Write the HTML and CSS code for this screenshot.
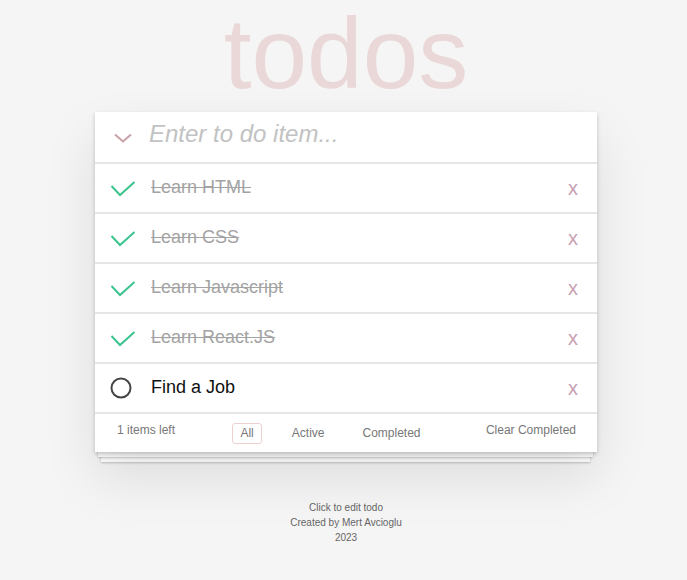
FILE: index.html
```html
<!DOCTYPE html>
<html lang="en">
<head>
<meta charset="utf-8">
<title>todos</title>
<link rel="stylesheet" href="styles.css">
</head>
<body>
<h1 class="title">todos</h1>
<section class="app">
  <div class="sheet sheet-back"></div>
  <div class="sheet sheet-mid"></div>
  <div class="card">
    <header class="new-row">
      <svg class="chevron" width="18" height="10" viewBox="0 0 18 10"><polyline points="1,1.5 9,8.5 17,1.5" fill="none" stroke="#c9a0a6" stroke-width="2"/></svg>
      <input class="new-input" type="text" placeholder="Enter to do item...">
    </header>
    <ul class="list">
      <li class="item done">
        <svg class="icon" width="26" height="18" viewBox="0 0 26 18"><polyline points="1.5,6 10,15 24.5,2" fill="none" stroke="#3cc48f" stroke-width="2"/></svg>
        <span class="label">Learn HTML</span>
        <span class="remove">x</span>
      </li>
      <li class="item done">
        <svg class="icon" width="26" height="18" viewBox="0 0 26 18"><polyline points="1.5,6 10,15 24.5,2" fill="none" stroke="#3cc48f" stroke-width="2"/></svg>
        <span class="label">Learn CSS</span>
        <span class="remove">x</span>
      </li>
      <li class="item done">
        <svg class="icon" width="26" height="18" viewBox="0 0 26 18"><polyline points="1.5,6 10,15 24.5,2" fill="none" stroke="#3cc48f" stroke-width="2"/></svg>
        <span class="label">Learn Javascript</span>
        <span class="remove">x</span>
      </li>
      <li class="item done">
        <svg class="icon" width="26" height="18" viewBox="0 0 26 18"><polyline points="1.5,6 10,15 24.5,2" fill="none" stroke="#3cc48f" stroke-width="2"/></svg>
        <span class="label">Learn React.JS</span>
        <span class="remove">x</span>
      </li>
      <li class="item">
        <svg class="icon circle" width="26" height="24" viewBox="0 0 26 24"><circle cx="11" cy="12" r="9.5" fill="none" stroke="#444" stroke-width="2"/></svg>
        <span class="label">Find a Job</span>
        <span class="remove">x</span>
      </li>
    </ul>
    <footer class="bar">
      <span class="count">1 items left</span>
      <div class="filters">
        <span class="filter selected">All</span>
        <span class="filter">Active</span>
        <span class="filter">Completed</span>
      </div>
      <span class="clear">Clear Completed</span>
    </footer>
  </div>
</section>
<footer class="info">
  <p>Click to edit todo</p>
  <p>Created by Mert Avcioglu</p>
  <p>2023</p>
</footer>
</body>
</html>
```

FILE: styles.css
```css
* { box-sizing: border-box; }

body {
  margin: 0;
  padding: 0 0 0 5px;
  background: #f5f5f5;
  font-family: "Liberation Sans", Arial, sans-serif;
  color: #111;
}

.title {
  margin: 0 0 6px;
  font-size: 100px;
  line-height: 106px;
  font-weight: normal;
  text-align: center;
  color: rgba(175, 47, 47, 0.15);
}

.app {
  position: relative;
  width: 502px;
  margin: 0 auto;
}

.sheet {
  position: absolute;
  height: 30px;
  background: #fff;
  box-shadow: 0 1px 2px rgba(0, 0, 0, 0.22);
}

.sheet-mid {
  left: 3px;
  right: 4px;
  bottom: -5px;
  z-index: 1;
}

.sheet-back {
  left: 6px;
  right: 7px;
  bottom: -10px;
  z-index: 0;
}

.card {
  position: relative;
  z-index: 2;
  background: #fff;
  box-shadow: 0 2px 4px rgba(0, 0, 0, 0.2), 0 25px 50px rgba(0, 0, 0, 0.1);
}

.new-row {
  height: 50px;
  display: flex;
  align-items: flex-start;
}

.chevron {
  margin: 21px 0 0 19px;
  flex: none;
}

.new-input {
  margin: 8px 0 0 17px;
  padding: 0;
  border: 0;
  outline: none;
  height: 28px;
  line-height: 28px;
  flex: 1;
  font-family: "Liberation Sans", Arial, sans-serif;
  font-size: 24px;
  font-style: italic;
  color: #333;
  background: transparent;
}

.new-input::placeholder {
  color: #c2c2c2;
  font-style: italic;
}

.list {
  list-style: none;
  margin: 0;
  padding: 0;
}

.item {
  height: 50px;
  border-top: 2px solid #e6e6e6;
  display: flex;
  align-items: center;
  padding: 0 19px 1px 15px;
}

.icon {
  flex: none;
  margin-right: 15px;
  margin-top: 2px;
}

.icon.circle {
  margin-top: 0;
}

.label {
  flex: 1;
  font-size: 18px;
  line-height: 22px;
  color: #111;
  padding-bottom: 2px;
}

.done .label {
  color: #a3a3a3;
  text-decoration: line-through;
}

.remove {
  font-size: 20px;
  line-height: 22px;
  color: #c9a0b4;
}

.bar {
  height: 40px;
  border-top: 2px solid #e6e6e6;
  display: flex;
  justify-content: space-between;
  align-items: flex-start;
  padding: 9px 21px 0 22px;
  font-size: 12px;
  line-height: 15px;
  color: #777;
}

.filters {
  display: flex;
  gap: 22px;
}

.filter {
  padding: 2px 7px;
  line-height: 15px;
  border: 1px solid transparent;
  border-radius: 3px;
}

.filter.selected {
  border-color: rgba(175, 47, 47, 0.22);
}

.info {
  margin-top: 48px;
  text-align: center;
  font-size: 10px;
  line-height: 15px;
  color: #666;
}

.info p {
  margin: 0;
}
```
